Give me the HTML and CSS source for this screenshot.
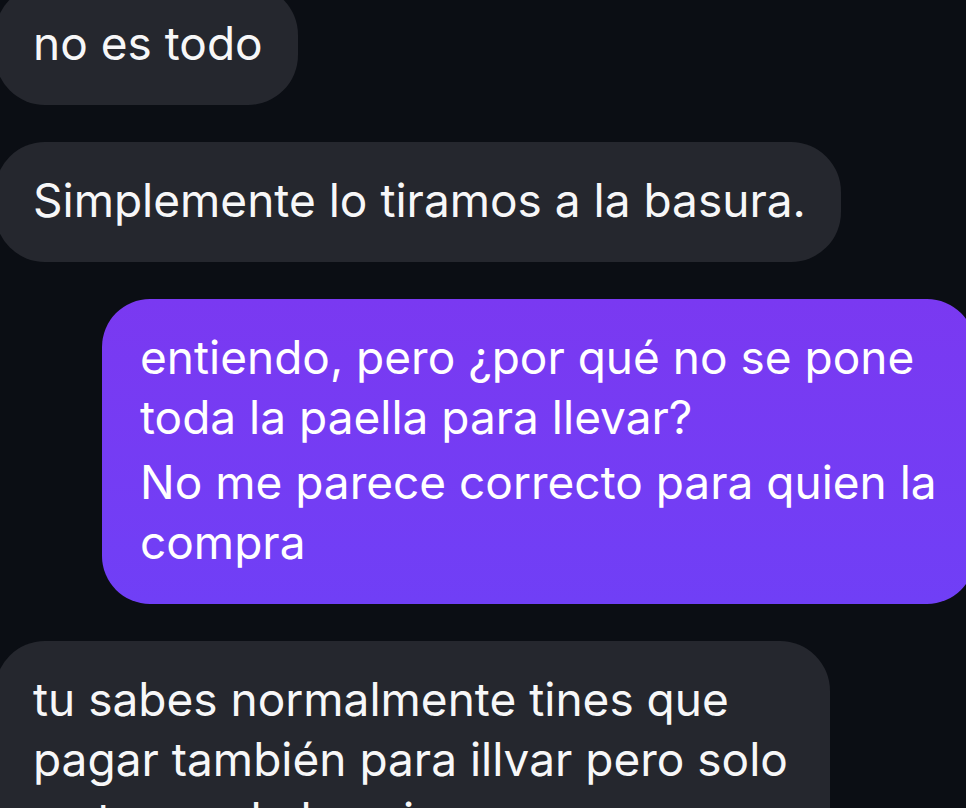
FILE: index.html
```html
<!DOCTYPE html>
<html lang="es">
<head>
  <meta charset="UTF-8">
  <title>Chat</title>
  <link rel="stylesheet" href="styles.css">
</head>
<body>
  <div class="chat">

    <!-- recibidos -->
    <div class="bubble in">
      <p>no es todo</p>
    </div>

    <div class="bubble in">
      <p>Simplemente lo tiramos a la basura.</p>
    </div>

    <!-- enviado -->
    <div class="bubble out">
      <p>entiendo, pero ¿por qué no se pone toda la paella para llevar?</p>
      <p>No me parece correcto para quien la compra</p>
    </div>

    <div class="bubble in wide">
      <p>tu sabes normalmente tines que pagar también para illvar pero solo se te queda la caja</p>
    </div>

  </div>
</body>
</html>
```

FILE: styles.css
```css
html, body {
  margin: 0;
  height: 100%;
  overflow: hidden;
}
body {
  font-family: 'Inter', 'Noto Sans', sans-serif;
  background-color: #0b0e14;
  color: #fff;
}
.chat {
  display: flex;
  flex-direction: column;
  gap: 37px;
  margin-top: -15px;
}
.bubble {
  box-sizing: border-box;
  padding: 28px 35px 32px 38px;
  border-radius: 50px;
  font-size: 46px;
  line-height: 60px;
}
.bubble p {
  margin: 0;
}
.bubble p + p {
  margin-top: 5px;
}
.in {
  align-self: flex-start;
  margin-left: -5px;
  background: #25272e;
  color: #f7f7f8;
}
.in.wide {
  max-width: 835px;
}
.out {
  align-self: flex-end;
  margin-right: -9px;
  max-width: 873px;
  padding-right: 38px;
  border-radius: 48px;
  background: linear-gradient(#7a39f1, #703ff6);
}
```
